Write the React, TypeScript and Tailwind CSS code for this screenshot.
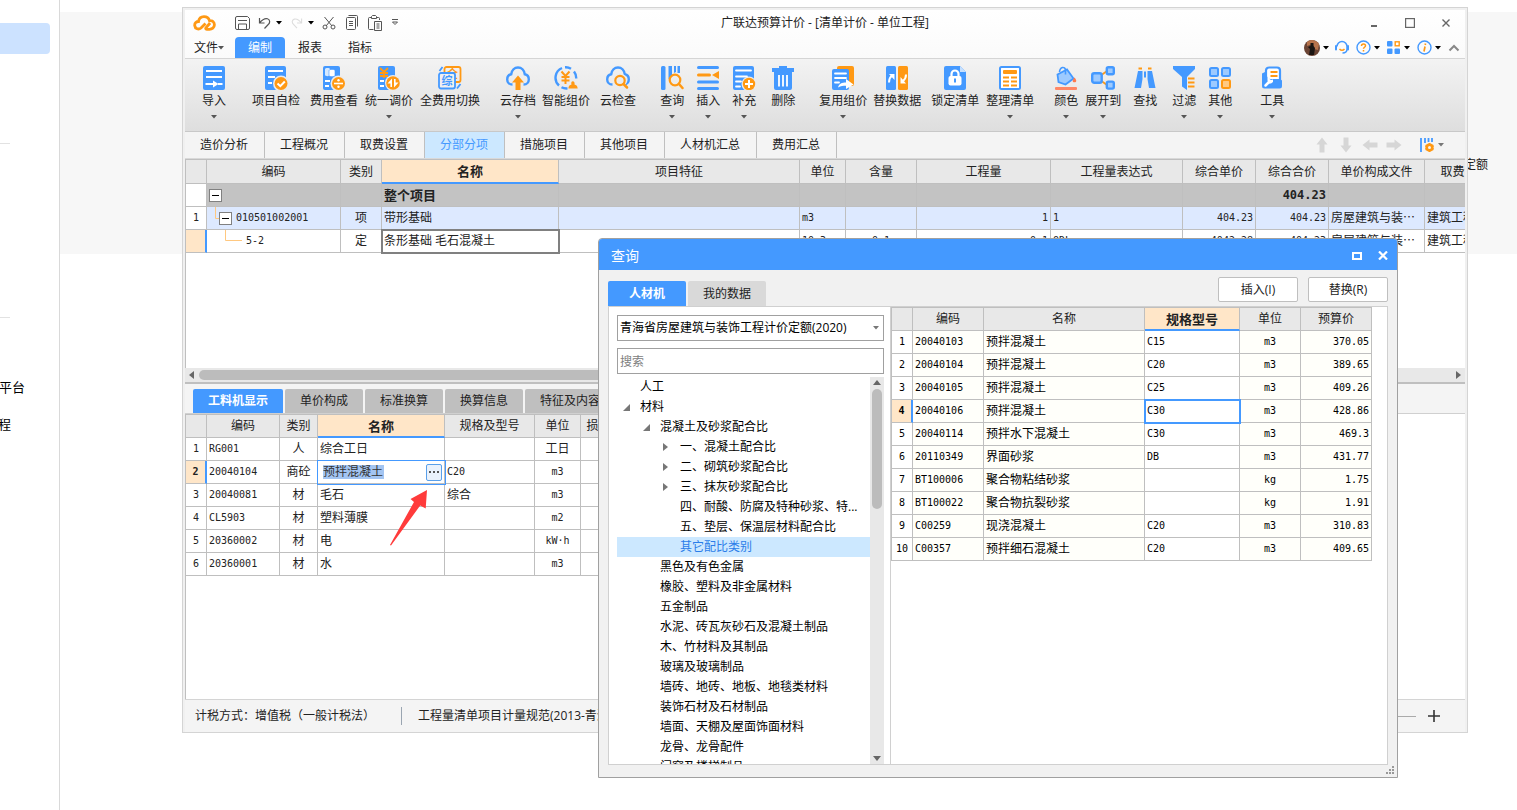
import React from "react";

const BLUE = "#4499ff";
const ORANGE = "#ff9914";

interface RibbonItem {
  label: string;
  icon: React.ReactNode;
  gap: string;
  menu?: boolean;
}

interface TreeItem {
  label: string;
  level: number;
  state?: "open" | "closed";
  selected?: boolean;
}

const Caret = ({ className = "text-black" }: { className?: string }) => (
  <svg className={className} width="6" height="4" viewBox="0 0 6 4" fill="currentColor" aria-hidden="true">
    <path d="M0 0h6L3 3.5z" />
  </svg>
);

const Icon = ({ children }: { children: React.ReactNode }) => (
  <svg className="block shrink-0" width="24" height="24" viewBox="0 0 24 24" fill="none" aria-hidden="true">
    {children}
  </svg>
);

const CLOUD = "M6.500 18.500C3 18.500 1.200 16 1.200 13.400c0-2.700 1.800-4.700 4-5.100C5.700 4.300 8.500 1.500 12 1.500s6.300 2.800 6.800 6.800c2.200.4 4 2.400 4 5.100 0 2.600-1.800 5.100-5.300 5.100";

const icons = {
  importDoc: (
    <Icon>
      <rect x="1" width="22" height="24" rx="2" fill={BLUE} />
      <path d="M4 5h16M4 11h16M3.500 18h8M16 18h4.500" stroke="#fff" strokeWidth="2" />
      <path d="M11 14.500l5.500 3.500-5.500 3.500z" fill="#fff" />
    </Icon>
  ),
  check: (
    <Icon>
      <path d="M3 0h17a2 2 0 0 1 2 2v22H3a2 2 0 0 1-2-2V2a2 2 0 0 1 2-2z" fill={BLUE} />
      <path d="M4 5h15M4 11h7M4 17h4" stroke="#fff" strokeWidth="2" />
      <circle cx="17" cy="17.500" r="8" fill="#ececec" />
      <circle cx="17" cy="17.500" r="6.500" fill={ORANGE} />
      <path d="M13.500 17.500l2.800 2.700 4.500-4.700" stroke="#fff" strokeWidth="2" />
    </Icon>
  ),
  view: (
    <Icon>
      <rect x="1" width="17" height="24" rx="2" fill={BLUE} />
      <path d="M3 3c0-1.500 5-1.500 5 0v6c0 1.500-5 1.500-5 0z" fill="#d5e9ff" />
      <path d="M7 4.500c0-1.500 6-1.500 6 0v5c0 1.500-6 1.500-6 0z" fill="#fff" stroke={BLUE} strokeWidth=".6" />
      <path d="M3 15h5M3 20h4" stroke="#fff" strokeWidth="2" />
      <circle cx="16.500" cy="17.500" r="8" fill="#ececec" />
      <circle cx="16.500" cy="17.500" r="6.500" fill={ORANGE} />
      <path d="M12 17.500h9" stroke="#fff" strokeWidth="1.600" />
      <circle cx="16.500" cy="14.200" r="1.200" fill="#fff" />
      <circle cx="16.500" cy="20.800" r="1.200" fill="#fff" />
    </Icon>
  ),
  adjust: (
    <Icon>
      <rect x="1" width="17" height="24" rx="2" fill={BLUE} />
      <path d="M3 2l4 4 4-4M7 6v6M3 7h8M3 10h8" stroke={ORANGE} strokeWidth="1.800" />
      <path d="M3 15h4M3 20h4" stroke="#fff" strokeWidth="2" />
      <circle cx="16" cy="17" r="8" fill="#ececec" />
      <circle cx="16" cy="17" r="6.800" fill={ORANGE} />
      <path d="M15 12.500V21h-1.600v-3.500h-2.900z" fill="#fff" />
      <path d="M17 21.500V13h1.600v3.500h2.900z" fill="#fff" />
    </Icon>
  ),
  swap: (
    <Icon>
      <rect x="6.500" y="1" width="16" height="15" rx="2" stroke={ORANGE} strokeWidth="1.800" />
      <text x="14.500" y="12" fontSize="11" fontWeight="700" textAnchor="middle" fill={ORANGE}>全</text>
      <rect x="1" y="7" width="16" height="15.500" rx="2" fill="#f0f0f0" stroke={BLUE} strokeWidth="1.800" />
      <text x="9" y="18.500" fontSize="11" fontWeight="700" textAnchor="middle" fill={BLUE}>综</text>
      <path d="M1.500 5l3-4M19 22.500l3.500-4.500" stroke={BLUE} strokeWidth="1.800" />
    </Icon>
  ),
  cloudUp: (
    <Icon>
      <path d={CLOUD} stroke={BLUE} strokeWidth="2.400" />
      <path d="M12 9.500l6 7h-3.500V24h-5v-7.500H6z" fill={ORANGE} />
    </Icon>
  ),
  smart: (
    <Icon>
      <path d="M8 2A10.500 10.500 0 0 0 5 19.500M11 1.200a10.500 10.500 0 0 1 6 1.600M20 5.500a10.500 10.500 0 0 1 2.200 7M7.500 21.200a10.500 10.500 0 0 0 6 1.200" stroke={BLUE} strokeWidth="2.400" />
      <path d="M7.500 5.500l4 4.500 4-4.500M11.500 10v8M7.500 11h8M7.500 14.500h8" stroke={ORANGE} strokeWidth="2" />
      <path d="M14.500 22.500c0-3 1.500-3.500 3-4-1.500-4.500 4-4.500 3 0 1.500.5 3 1 3.200 4z" fill={ORANGE} />
    </Icon>
  ),
  cloudFind: (
    <Icon>
      <path d={CLOUD} stroke={BLUE} strokeWidth="2.400" />
      <circle cx="14" cy="14.500" r="7" fill="#ececec" />
      <circle cx="14" cy="14.500" r="4.700" stroke={ORANGE} strokeWidth="2.200" />
      <path d="M17.500 18l3.500 3.500" stroke={ORANGE} strokeWidth="2.500" strokeLinecap="round" />
    </Icon>
  ),
  query: (
    <Icon>
      <rect x="1" width="4.500" height="24" rx="1.500" fill={BLUE} />
      <path d="M8.500 0H12v10l-3.500 3zM14 0h2v6l-2 1zM17.500 0H20v7h-2.500z" fill={BLUE} />
      <circle cx="15" cy="14" r="5.300" stroke={ORANGE} strokeWidth="2.200" />
      <path d="M19 18l3.500 4" stroke={ORANGE} strokeWidth="2.500" strokeLinecap="round" />
    </Icon>
  ),
  insert: (
    <Icon>
      <path d="M2.500 1.500h19M2.500 16h19M2.500 22.500h19" stroke={BLUE} strokeWidth="3" strokeLinecap="round" />
      <path d="M2.500 9h11" stroke={ORANGE} strokeWidth="3" strokeLinecap="round" />
      <path d="M16 9l7-4v8z" fill={ORANGE} />
    </Icon>
  ),
  append: (
    <Icon>
      <rect x="1" width="21" height="24" rx="2" fill={BLUE} />
      <path d="M4 4.500h15M4 10.500h11M4 15.500h5M4 20.500h4" stroke="#fff" strokeWidth="1.800" strokeLinecap="round" />
      <circle cx="17" cy="18" r="7.500" fill="#ececec" />
      <circle cx="17" cy="18" r="6.200" fill={ORANGE} />
      <path d="M17 14v8M13 18h8" stroke="#fff" strokeWidth="2" />
    </Icon>
  ),
  trash: (
    <Icon>
      <path d="M1 2h7V0h8v2h7v4h-2v16a2 2 0 0 1-2 2H5a2 2 0 0 1-2-2V6H1z" fill={BLUE} />
      <path d="M8 9v11.500M12 9v11.500M16 9v11.500" stroke="#fff" strokeWidth="1.800" />
    </Icon>
  ),
  reuse: (
    <Icon>
      <rect x="6" width="17" height="20" rx="2" fill={ORANGE} />
      <rect x="1" y="3" width="17" height="21" rx="2" fill={BLUE} />
      <path d="M4 7.500h11M4 12h11M4 16.500h4" stroke="#fff" strokeWidth="1.800" strokeLinecap="round" />
      <path d="M7 21.500c1-4 4-5 8-5V13l7.500 5.500L15 23v-3.200c-3 0-5 .2-8 1.700z" fill="#fff" />
    </Icon>
  ),
  replace: (
    <Icon>
      <rect x="1" width="10" height="24" rx="1.500" fill={BLUE} />
      <rect x="13" width="10" height="24" rx="1.500" fill={ORANGE} />
      <path d="M4 16.500c0-3 .5-5 3-7M21 8.500c0 3-.5 4.500-3 6.500" stroke="#fff" strokeWidth="2" />
      <path d="M4 8h5.500v6zM15.500 11v6.500H21z" fill="#fff" />
    </Icon>
  ),
  lock: (
    <Icon>
      <path d="M3 0h14l6 6v16a2 2 0 0 1-2 2H3a2 2 0 0 1-2-2V2a2 2 0 0 1 2-2z" fill={BLUE} />
      <path d="M17 0l6 6h-6z" fill="#c5e0ff" />
      <path d="M8.500 11V8a3.500 3.500 0 0 1 7 0v3" stroke="#fff" strokeWidth="2.200" />
      <rect x="5.500" y="10" width="13" height="9.500" rx="2" fill="#fff" />
      <path d="M12 12.500v4" stroke={BLUE} strokeWidth="2" />
    </Icon>
  ),
  arrange: (
    <Icon>
      <rect x="2" y="1" width="20" height="22" rx="1.500" fill="#fff" stroke={BLUE} strokeWidth="2" />
      <rect x="5" y="4" width="14" height="4" rx="1" fill={ORANGE} />
      <path d="M5 11.500h6M13 11.500h6M5 15.500h6M13 15.500h6M5 19.500h6M13 19.500h6" stroke={ORANGE} strokeWidth="1.800" />
    </Icon>
  ),
  color: (
    <Icon>
      <path d="M3.500 8.500L13 3.500l6.500 9-8 6L4.500 16z" fill="#9dcaff" stroke={BLUE} strokeWidth="1.800" />
      <path d="M5.500 6C6 .5 11 .2 11.500 4v4.500" stroke={BLUE} strokeWidth="1.600" />
      <path d="M20.500 11.500c2.500 3 2.200 4.800 0 4.800s-2.500-1.800 0-4.800z" fill="#ff7a4d" />
      <rect x="1" y="21" width="22" height="3" rx="1" fill="#ff8766" />
    </Icon>
  ),
  expand: (
    <Icon>
      <path d="M9 10l7-5M9 14l7 5" stroke={ORANGE} strokeWidth="1.800" />
      <rect x="1.200" y="7.200" width="9.500" height="9.500" rx="2" fill="#9dcaff" stroke={BLUE} strokeWidth="2.400" />
      <rect x="15.800" y="1.200" width="7" height="7" rx="1.500" fill="#9dcaff" stroke={BLUE} strokeWidth="2.400" />
      <rect x="15.800" y="15.600" width="7" height="7" rx="1.500" fill="#9dcaff" stroke={BLUE} strokeWidth="2.400" />
    </Icon>
  ),
  find: (
    <Icon>
      <path d="M5 5h4.500v8L8 22H1.500zM19 5h-4.500v8l1.500 9h6.500z" fill={BLUE} />
      <path d="M11 5.500h2v6h-2z" fill={BLUE} />
      <path d="M5.500 2.500h3.500M15 2.500h3.500" stroke={ORANGE} strokeWidth="2" />
    </Icon>
  ),
  filter: (
    <Icon>
      <path d="M1 0h22v3l-8 8v13l-5-3.500V11L1 3z" fill={BLUE} />
      <path d="M15 11h8v13h-8z" fill="#ececec" />
      <path d="M16 12.500h6.500M16 16.500h6.500M16 20.500h6.500" stroke={ORANGE} strokeWidth="2" />
    </Icon>
  ),
  others: (
    <Icon>
      <rect x="2" y="2" width="8" height="8" rx="1.500" fill="#9dcaff" stroke={BLUE} strokeWidth="2" />
      <rect x="14" y="2" width="8" height="8" rx="1.500" fill="#9dcaff" stroke={BLUE} strokeWidth="2" />
      <rect x="2" y="14" width="8" height="8" rx="1.500" fill="#9dcaff" stroke={BLUE} strokeWidth="2" />
      <rect x="14" y="14" width="8" height="8" rx="1.500" fill="#ffca84" stroke={ORANGE} strokeWidth="2" />
    </Icon>
  ),
  tools: (
    <Icon>
      <path d="M8.500 1.500h8.500a3 3 0 0 1 3 3V14H6V4.500a3 3 0 0 1 3-3z" fill="#fff" stroke={BLUE} strokeWidth="2.200" />
      <path d="M10.500 6h7M10.500 10h7" stroke={ORANGE} strokeWidth="1.800" />
      <path d="M2 7.500L5 6h2v4c0 2 1.500 3 3.500 3H20l2 1.500V20a2.500 2.500 0 0 1-2.500 2.500h-15A2.500 2.500 0 0 1 2 20z" fill={BLUE} />
      <path d="M5.500 19.500l4-4" stroke="#fff" strokeWidth="2.500" strokeLinecap="round" />
      <path d="M7.500 14.500V12l2-1.500v2.500l1.500 1 2-.5V16l-2 1.500H8.500z" fill="#fff" />
    </Icon>
  ),
};

const ribbon: RibbonItem[] = [
  { label: "导入", icon: icons.importDoc, gap: "ml-[17px]", menu: true },
  { label: "项目自检", icon: icons.check, gap: "ml-[26px]" },
  { label: "费用查看", icon: icons.view, gap: "ml-[10px]" },
  { label: "统一调价", icon: icons.adjust, gap: "ml-[7px]", menu: true },
  { label: "全费用切换", icon: icons.swap, gap: "ml-[7px]" },
  { label: "云存档", icon: icons.cloudUp, gap: "ml-[20px]", menu: true },
  { label: "智能组价", icon: icons.smart, gap: "ml-[6px]" },
  { label: "云检查", icon: icons.cloudFind, gap: "ml-[10px]" },
  { label: "查询", icon: icons.query, gap: "ml-[24px]", menu: true },
  { label: "插入", icon: icons.insert, gap: "ml-[12px]", menu: true },
  { label: "补充", icon: icons.append, gap: "ml-[12px]", menu: true },
  { label: "删除", icon: icons.trash, gap: "ml-[15px]" },
  { label: "复用组价", icon: icons.reuse, gap: "ml-[24px]", menu: true },
  { label: "替换数据", icon: icons.replace, gap: "ml-[6px]" },
  { label: "锁定清单", icon: icons.lock, gap: "ml-[10px]" },
  { label: "整理清单", icon: icons.arrange, gap: "ml-[7px]", menu: true },
  { label: "颜色", icon: icons.color, gap: "ml-[20px]", menu: true },
  { label: "展开到", icon: icons.expand, gap: "ml-[7px]", menu: true },
  { label: "查找", icon: icons.find, gap: "ml-[12px]" },
  { label: "过滤", icon: icons.filter, gap: "ml-[15px]", menu: true },
  { label: "其他", icon: icons.others, gap: "ml-[12px]", menu: true },
  { label: "工具", icon: icons.tools, gap: "ml-[28px]", menu: true },
];

const pageTabs = ["造价分析", "工程概况", "取费设置", "分部分项", "措施项目", "其他项目", "人材机汇总", "费用汇总"];

const detailTabs = ["单价构成", "标准换算", "换算信息", "特征及内容", "工程量明细"];

const resources = [
  ["RG001", "人", "综合工日", "", "工日"],
  ["20040104", "商砼", "预拌混凝土", "C20", "m3"],
  ["20040081", "材", "毛石", "综合", "m3"],
  ["CL5903", "材", "塑料薄膜", "", "m2"],
  ["20360002", "材", "电", "", "kW·h"],
  ["20360001", "材", "水", "", "m3"],
];

const materials = [
  ["20040103", "预拌混凝土", "C15", "m3", "370.05"],
  ["20040104", "预拌混凝土", "C20", "m3", "389.65"],
  ["20040105", "预拌混凝土", "C25", "m3", "409.26"],
  ["20040106", "预拌混凝土", "C30", "m3", "428.86"],
  ["20040114", "预拌水下混凝土", "C30", "m3", "469.3"],
  ["20110349", "界面砂浆", "DB", "m3", "431.77"],
  ["BT100006", "聚合物粘结砂浆", "", "kg", "1.75"],
  ["BT100022", "聚合物抗裂砂浆", "", "kg", "1.91"],
  ["C00259", "现浇混凝土", "C20", "m3", "310.83"],
  ["C00357", "预拌细石混凝土", "C20", "m3", "409.65"],
];

const tree: TreeItem[] = [
  { label: "人工", level: 0 },
  { label: "材料", level: 0, state: "open" },
  { label: "混凝土及砂浆配合比", level: 1, state: "open" },
  { label: "一、混凝土配合比", level: 2, state: "closed" },
  { label: "二、砌筑砂浆配合比", level: 2, state: "closed" },
  { label: "三、抹灰砂浆配合比", level: 2, state: "closed" },
  { label: "四、耐酸、防腐及特种砂浆、特...", level: 2 },
  { label: "五、垫层、保温层材料配合比", level: 2 },
  { label: "其它配比类别", level: 2, selected: true },
  { label: "黑色及有色金属", level: 1 },
  { label: "橡胶、塑料及非金属材料", level: 1 },
  { label: "五金制品", level: 1 },
  { label: "水泥、砖瓦灰砂石及混凝土制品", level: 1 },
  { label: "木、竹材料及其制品", level: 1 },
  { label: "玻璃及玻璃制品", level: 1 },
  { label: "墙砖、地砖、地板、地毯类材料", level: 1 },
  { label: "装饰石材及石材制品", level: 1 },
  { label: "墙面、天棚及屋面饰面材料", level: 1 },
  { label: "龙骨、龙骨配件", level: 1 },
  { label: "门窗及楼梯制品", level: 1 },
];

const indent = ["pl-[6px]", "pl-[26px]", "pl-[46px]"];

const MONO = "font-['DejaVu_Sans_Mono','Noto_Sans_CJK_SC',monospace] text-[10px]";
const TABLE = "table-fixed border-separate border-spacing-0 whitespace-nowrap text-left";
const TH = "h-[23px] border-r border-b border-[#bfbfbf] bg-[#e8e8e8] p-0 text-center font-normal";
const TD = "h-[23px] overflow-hidden border-r border-b border-[#bfbfbf] px-0.5 py-0";
const HOT = "h-[23px] border-r border-b-2 border-r-[#bfbfbf] border-b-[#4499ff] bg-[#ffe6c8] p-0 text-center text-[13px] font-bold";

// picks the narrow face for codes and numbers, the regular one for Chinese text
const face = (text: string) => (/^[\x20-\x7e·]*$/.test(text) ? MONO : "");

const Cols = ({ widths }: { widths: string[] }) => (
  <colgroup>
    {widths.map((width, i) => (
      <col key={i} className={width} />
    ))}
  </colgroup>
);

const Minus = () => (
  <button aria-label="折叠" className="flex size-[13px] shrink-0 items-center justify-center border border-[#808080] bg-white">
    <span className="h-px w-[7px] bg-black" />
  </button>
);

const TitleBar = () => (
  <div className="grid h-[27px] grid-cols-[1fr_auto_1fr] items-center pb-0.5">
    <div className="flex items-center pl-2">
      <svg width="23" height="16" viewBox="0 0 23 16" fill="none" aria-hidden="true">
        <path d="M12.500 8.500L8 13C5.500 15 2 13.800 1.700 10.500 1.500 8 3.500 6.500 5.500 6.500 6 3 8.500 1.600 11 1.600c3 0 4.800 1.600 5.500 4 2.800-.4 4.900 1.500 4.900 4.200 0 2.900-2.400 4.600-5.200 4.500h-2.500c-1 0-1.300-.8-.6-1.600l4-4.700" stroke={ORANGE} strokeWidth="2.800" />
      </svg>
      <button aria-label="保存" className="ml-[19px]">
        <svg width="15" height="14" viewBox="0 0 15 14" fill="none" stroke="#555">
          <path d="M2 .5h10.500l2 2V12a1.500 1.500 0 0 1-1.500 1.500H2A1.500 1.500 0 0 1 .5 12V2A1.500 1.500 0 0 1 2 .5zM3 4.500h9M3.500 13.500V8h8v5.500" />
        </svg>
      </button>
      <button aria-label="撤销" className="ml-2 flex items-center gap-[5px]">
        <svg width="13" height="12" viewBox="0 0 13 12" fill="none" stroke="#555" strokeWidth="1.200">
          <path d="M1.500 1v5h5M1.500 6C4 3 7 1 9.500 1.800c2.800 1 2.800 4 .5 6L6.500 11.500" />
        </svg>
        <Caret />
      </button>
      <button aria-label="重做" className="ml-[9px] flex items-center gap-[5px]">
        <svg width="12" height="12" viewBox="0 0 13 12" fill="none" stroke="#ddd" strokeWidth="1.200">
          <path d="M11.500 1v5h-5M11.500 6C9 3 6 1 3.500 1.800c-2.800 1-2.800 4-.5 6l3.500 3.700" />
        </svg>
        <Caret />
      </button>
      <button aria-label="剪切" className="ml-2">
        <svg width="14" height="14" viewBox="0 0 14 14" fill="none" stroke="#555">
          <path d="M2.500 1l7.500 9M11.500 1L4 10" />
          <circle cx="3" cy="11" r="2" />
          <circle cx="11" cy="11" r="2" />
        </svg>
      </button>
      <button aria-label="复制" className="ml-[10px]">
        <svg width="12" height="15" viewBox="0 0 12 15" fill="none" stroke="#555">
          <path d="M2.500.5h8a1 1 0 0 1 1 1v10M.5 3.500a1 1 0 0 1 1-1h7a1 1 0 0 1 1 1v10a1 1 0 0 1-1 1h-7a1 1 0 0 1-1-1zM3 6.500h4M3 8.500h4M3 10.500h4" />
        </svg>
      </button>
      <button aria-label="粘贴" className="ml-[10px]">
        <svg width="15" height="16" viewBox="0 0 15 16" fill="none" stroke="#555">
          <path d="M5.500 14.500h-4a1 1 0 0 1-1-1v-10a1 1 0 0 1 1-1H3M9 2.500h1.500a1 1 0 0 1 1 1V5M3.500 1.500L4.500.5h3l1 1v2h-5zM6.500 6.500h7v9h-7zM8.500 9h3M8.500 11h3M8.500 13h3" />
        </svg>
      </button>
      <button aria-label="自定义" className="ml-2">
        <svg width="8" height="7" viewBox="0 0 8 7" fill="none" stroke="#555">
          <path d="M1 .5h6M1.500 3h5L4 5.500z" />
        </svg>
      </button>
    </div>
    <h1>广联达预算计价 - [清单计价 - 单位工程]</h1>
    <div className="flex items-center justify-end gap-[26px] pr-[14px] text-[#666]">
      <button aria-label="最小化">
        <svg width="10" height="10" viewBox="0 0 10 10" stroke="currentColor" strokeWidth="2">
          <path d="M2 8h6" />
        </svg>
      </button>
      <button aria-label="最大化">
        <svg width="10" height="10" viewBox="0 0 10 10" fill="none" stroke="currentColor" strokeWidth="1.200">
          <rect x=".6" y=".6" width="8.800" height="8.800" />
        </svg>
      </button>
      <button aria-label="关闭">
        <svg width="10" height="10" viewBox="0 0 10 10" stroke="currentColor" strokeWidth="1.400">
          <path d="M1.500 1.500l7 7M8.500 1.500l-7 7" />
        </svg>
      </button>
    </div>
  </div>
);

const MenuBar = () => (
  <nav className="flex h-[22px] items-center border-b border-[#d5d5d5]">
    <button className="ml-[9px] flex items-center">
      文件
      <Caret className="text-[#555]" />
    </button>
    <button className="ml-[11px] h-full w-[50px] rounded-t-sm bg-[#4499ff] text-white">编制</button>
    <button className="ml-[13px]">报表</button>
    <button className="ml-[26px]">指标</button>
    <div className="ml-auto flex items-center pr-[5px]">
      <button aria-label="账号" className="flex items-center gap-[3px]">
        <svg width="16" height="16" viewBox="0 0 16 16">
          <circle cx="8" cy="8" r="8" fill="#6b4434" />
          <path d="M3 2a8 8 0 0 1 12 2l-1 6-4-1-1-5-6 2z" fill="#b8744c" />
          <path d="M6.500 3h3v3l1.500 2-1 7H5l1-6-2-2 2.500-1z" fill="#1b1512" />
        </svg>
        <Caret />
      </button>
      <button aria-label="客服" className="ml-[6px]">
        <svg width="14" height="15" viewBox="0 0 14 15" fill="none">
          <path d="M2 6.500a5 5 0 0 1 10 0v2.500c0 2.500-2 4-4.500 4" stroke={BLUE} strokeWidth="1.500" />
          <path d="M1 6v3.500M13 6v3.500" stroke={BLUE} strokeWidth="2" strokeLinecap="round" />
          <path d="M4.500 9c1.500 1.500 3.500 1.500 5 0" stroke={ORANGE} strokeWidth="1.500" />
        </svg>
      </button>
      <button aria-label="帮助" className="ml-[7px] flex items-center gap-[3px]">
        <svg width="15" height="15" viewBox="0 0 15 15" fill="none">
          <circle cx="7.500" cy="7.500" r="6.500" stroke={BLUE} strokeWidth="1.400" />
          <path d="M5.500 6c0-2.700 4-2.500 4-.2 0 1.500-2 1.400-2 3M7.500 10v1.500" stroke={ORANGE} strokeWidth="1.500" />
        </svg>
        <Caret />
      </button>
      <button aria-label="应用" className="ml-[7px] flex items-center gap-[4px]">
        <svg width="13" height="13" viewBox="0 0 13 13" fill={BLUE}>
          <rect width="5.500" height="5.500" rx="1" />
          <rect y="7.500" width="5.500" height="5.500" rx="1" />
          <rect x="7.500" y="7.500" width="5.500" height="5.500" rx="1" />
          <rect x="8.200" y=".8" width="4" height="4" fill="#fff" stroke={ORANGE} strokeWidth="1.400" />
        </svg>
        <Caret />
      </button>
      <button aria-label="关于" className="ml-[7px] flex items-center gap-[3px]">
        <svg width="15" height="15" viewBox="0 0 15 15" fill="none">
          <circle cx="7.500" cy="7.500" r="6.500" stroke={BLUE} strokeWidth="1.400" />
          <path d="M8.500 3.500L8.200 5M8 6.500l-1 5" stroke={ORANGE} strokeWidth="1.700" />
        </svg>
        <Caret />
      </button>
      <button aria-label="收起" className="ml-[7px]">
        <svg width="12" height="8" viewBox="0 0 12 8" fill="none" stroke="#888" strokeWidth="2">
          <path d="M1.500 6.500L6 2l4.500 4.500" />
        </svg>
      </button>
    </div>
  </nav>
);

const Ribbon = () => (
  <div className="flex h-[73px] items-start overflow-hidden border-b border-[#c8c8c8] bg-linear-to-b from-[#f3f3f3] to-[#dedede] pt-[7px]">
    {ribbon.map((item) => (
      <button key={item.label} className={`flex shrink-0 flex-col items-center ${item.gap}`}>
        {item.icon}
        <span className="mt-[3px] leading-4">{item.label}</span>
        {item.menu && <Caret className="mt-[6px] text-[#555]" />}
      </button>
    ))}
  </div>
);

const PageTabs = () => (
  <div className="flex h-[27px] shrink-0 border-b border-[#d9d9d9] bg-[#f4f4f4]">
    {pageTabs.map((tab) => (
      <button
        key={tab}
        className={`border-r border-[#bfbfbf] pr-4 pl-[15px] ${tab === "分部分项" ? "bg-[#cce8ff] text-[#4499ff]" : ""}`}
      >
        {tab}
      </button>
    ))}
    <div className="ml-auto flex items-center gap-2 pr-[21px] text-[#d6d6d6]">
      {["rotate-0", "rotate-180", "-rotate-90", "rotate-90"].map((turn) => (
        <button key={turn} aria-label="移动">
          <svg className={turn} width="16" height="16" viewBox="0 0 16 16" fill="currentColor">
            <path d="M8 .5l5.500 7H10.500V15.500h-5V7.500H2.500z" />
          </svg>
        </button>
      ))}
      <button aria-label="列设置" className="ml-[9px] flex items-center gap-[3px]">
        <svg width="16" height="16" viewBox="0 0 16 16" fill="none">
          <path d="M2 1v14M6 1v5M9.500 1v4M13 1v4" stroke={BLUE} strokeWidth="1.800" />
          <circle cx="10.500" cy="10.500" r="2.800" stroke={ORANGE} strokeWidth="2.600" />
          <path d="M10.500 6v1.500M10.500 13.500V15M6.500 8.500l1 .5M6.500 12.500l1-.5M14.500 8.500l-1 .5M14.500 12.500l-1-.5" stroke={ORANGE} strokeWidth="2" />
        </svg>
        <Caret className="text-[#777]" />
      </button>
    </div>
  </div>
);

const BillGrid = () => (
  <div className="h-[209px] shrink-0 overflow-hidden border-t border-l border-[#bfbfbf] bg-white">
    <table className={`${TABLE} w-[1319px]`}>
      <Cols
        widths={[
          "w-[21px]", "w-[134px]", "w-[41px]", "w-[177px]", "w-[241px]", "w-[46px]", "w-[71px]",
          "w-[134px]", "w-[132px]", "w-[73px]", "w-[73px]", "w-[96px]", "w-[80px]",
        ]}
      />
      <thead>
        <tr className="h-6">
          <th className={TH} />
          <th className={TH}>编码</th>
          <th className={TH}>类别</th>
          <th className={HOT}>名称</th>
          {["项目特征", "单位", "含量", "工程量", "工程量表达式", "综合单价", "综合合价", "单价构成文件", "取费专业"].map((h) => (
            <th key={h} className={TH}>{h}</th>
          ))}
        </tr>
      </thead>
      <tbody>
        <tr className="bg-[#c3c3c3]">
          <td className={`${TD} bg-white`} />
          <td className={TD}><Minus /></td>
          <td className={TD} />
          <td className={`${TD} text-[13px] leading-4 font-bold`}>整个项目</td>
          <td className={TD} /><td className={TD} /><td className={TD} /><td className={TD} /><td className={TD} /><td className={TD} />
          <td className={`${TD} text-right font-['DejaVu_Sans_Mono',monospace] text-[12px] font-bold`}>404.23</td>
          <td className={TD} /><td className={TD} />
        </tr>
        <tr className="bg-[#dde9ff]">
          <td className={`${TD} ${MONO} bg-white text-center`}>1</td>
          <td className={`${TD} ${MONO}`}>
            <div className="flex h-[22px] items-center">
              <svg width="10" height="22" viewBox="0 0 10 22" fill="none" stroke="#ffc880" aria-hidden="true">
                <path d="M6.500 0v11.500H10" />
              </svg>
              <Minus />
              <span className="ml-1">010501002001</span>
            </div>
          </td>
          <td className={`${TD} text-center`}>项</td>
          <td className={TD}>带形基础</td>
          <td className={TD} />
          <td className={`${TD} ${MONO}`}>m3</td>
          <td className={TD} />
          <td className={`${TD} ${MONO} text-right`}>1</td>
          <td className={`${TD} ${MONO}`}>1</td>
          <td className={`${TD} ${MONO} text-right`}>404.23</td>
          <td className={`${TD} ${MONO} text-right`}>404.23</td>
          <td className={TD}>房屋建筑与装⋯</td>
          <td className={TD}>建筑工程</td>
        </tr>
        <tr>
          <td className={`${TD} border-r-2 border-r-[#4499ff] bg-[#ffe6c8]`} />
          <td className={`${TD} ${MONO}`}>
            <div className="flex h-[22px] items-center">
              <svg width="33" height="22" viewBox="0 0 33 22" fill="none" stroke="#ffc880" aria-hidden="true">
                <path d="M16.500 0v10.500H33" />
              </svg>
              <span className="ml-1">5-2</span>
            </div>
          </td>
          <td className={`${TD} text-center`}>定</td>
          <td className={`${TD} outline-2 -outline-offset-1 outline-[#808080]`}>条形基础 毛石混凝土</td>
          <td className={TD} />
          <td className={`${TD} ${MONO}`}>10m3</td>
          <td className={`${TD} ${MONO} text-center`}>0.1</td>
          <td className={`${TD} ${MONO} text-right`}>0.1</td>
          <td className={`${TD} ${MONO}`}>QDL</td>
          <td className={`${TD} ${MONO} text-right`}>4042.28</td>
          <td className={`${TD} ${MONO} text-right`}>404.23</td>
          <td className={TD}>房屋建筑与装⋯</td>
          <td className={TD}>建筑工程</td>
        </tr>
      </tbody>
    </table>
  </div>
);

const ResourceGrid = () => (
  <div className="min-h-0 flex-1 overflow-hidden border-l border-[#bfbfbf] bg-white">
    <table className={`${TABLE} w-[443px] border-t border-[#bfbfbf]`}>
      <Cols widths={["w-[21px]", "w-[73px]", "w-[38px]", "w-[127px]", "w-[90px]", "w-[46px]", "w-[48px]"]} />
      <thead>
        <tr>
          <th className={TH} />
          <th className={TH}>编码</th>
          <th className={TH}>类别</th>
          <th className={HOT}>名称</th>
          <th className={TH}>规格及型号</th>
          <th className={TH}>单位</th>
          <th className={TH}>损耗率</th>
        </tr>
      </thead>
      <tbody>
        {resources.map(([code, kind, name, spec, unit], i) => {
          const active = i === 1;
          return (
            <tr key={code}>
              <td className={`${TD} ${MONO} text-center ${active ? "border-r-2 border-r-[#4499ff] bg-[#ffe6c8] font-bold" : ""}`}>{i + 1}</td>
              <td className={`${TD} ${MONO}`}>{code}</td>
              <td className={`${TD} text-center`}>{kind}</td>
              {active ? (
                <td className={`${TD} outline outline-offset-0 outline-[#4499ff]`}>
                  <div className="flex items-center justify-between pl-[3px]">
                    <input aria-label="名称" defaultValue={name} className="h-[14px] w-[61px] bg-[#a3c5f2] text-[#333]" />
                    <button aria-label="选择" className="flex h-[17px] w-4 items-center justify-center gap-[2px] rounded-xs border border-[#5aa0ea] bg-[#eaf2fc]">
                      <span className="size-[2px] bg-[#555]" />
                      <span className="size-[2px] bg-[#555]" />
                      <span className="size-[2px] bg-[#555]" />
                    </button>
                  </div>
                </td>
              ) : (
                <td className={TD}>{name}</td>
              )}
              <td className={`${TD} ${face(spec)}`}>{spec}</td>
              <td className={`${TD} text-center ${face(unit)}`}>{unit}</td>
              <td className={TD} />
            </tr>
          );
        })}
      </tbody>
    </table>
  </div>
);

const MainWindow = () => (
  <section className="absolute top-[7px] right-[49px] bottom-[77px] left-[182px] flex flex-col overflow-hidden border border-[#d4d4d4] bg-[#f0f0f0] px-0.5 pt-0.5">
    <header className="shrink-0 bg-linear-to-b from-white to-[#f3f3f3]">
      <TitleBar />
      <MenuBar />
      <Ribbon />
    </header>
    <PageTabs />
    <BillGrid />
    <div className="flex h-[14px] shrink-0 items-center justify-between bg-[#e8e8e8] px-1">
      <svg width="5" height="8" viewBox="0 0 5 8" fill="#666"><path d="M5 0v8L0 4z" /></svg>
      <div className="mr-[60px] ml-[5px] h-[10px] flex-1 rounded-full bg-[#bcbcbc]" />
      <svg width="5" height="8" viewBox="0 0 5 8" fill="#666"><path d="M0 0v8l5-4z" /></svg>
    </div>
    <div className="h-0.5 shrink-0 bg-[#bfbfbf]" />
    <div className="flex h-[30px] shrink-0 items-end gap-0.5 border-b border-[#d0d0d0] bg-[#f4f4f4] pl-2">
      <button className="h-6 w-[90px] rounded-t-xs bg-[#4499ff] font-bold text-white">工料机显示</button>
      {detailTabs.map((tab) => (
        <button key={tab} className="h-6 rounded-t-xs bg-[#bfbfbf] px-[15px]">{tab}</button>
      ))}
    </div>
    <ResourceGrid />
    <footer className="flex h-[33px] shrink-0 items-center border-t border-[#d4d4d4] bg-[#f4f4f4] pl-[10px]">
      <span>计税方式：增值税（一般计税法）</span>
      <span className="ml-[26px] h-[18px] w-px bg-[#9aa5b1]" />
      <span className="ml-4">工程量清单项目计量规范(2013-青海)</span>
      <div className="ml-auto flex items-center gap-3 pr-[25px]">
        <span className="h-px w-[120px] bg-[#aaa]" />
        <button aria-label="放大">
          <svg width="12" height="12" viewBox="0 0 12 12" stroke="#333" strokeWidth="1.600"><path d="M6 0v12M0 6h12" /></svg>
        </button>
      </div>
    </footer>
  </section>
);

const MaterialTree = () => (
  <div className="mt-[3px] flex min-h-0 flex-1">
    <ul className="min-w-0 flex-1 overflow-hidden text-black">
      {tree.map((node) => (
        <li
          key={node.label}
          className={`flex h-5 items-center whitespace-nowrap ${indent[node.level]} ${node.selected ? "bg-[#cce8ff] text-[#2b7de9]" : ""}`}
        >
          <span className="w-[17px] shrink-0">
            {node.state === "open" && (
              <svg width="7" height="7" viewBox="0 0 7 7" fill="#777"><path d="M7 0v7H0z" /></svg>
            )}
            {node.state === "closed" && (
              <svg width="5" height="8" viewBox="0 0 5 8" fill="#777"><path d="M0 0v8l5-4z" /></svg>
            )}
          </span>
          {node.label}
        </li>
      ))}
    </ul>
    <div className="flex w-[14px] flex-col items-center bg-[#e8e8e8] py-[3px]">
      <svg width="8" height="5" viewBox="0 0 8 5" fill="#666"><path d="M0 5h8L4 0z" /></svg>
      <div className="mt-1 h-[120px] w-[10px] rounded-full bg-[#bcbcbc]" />
      <svg className="mt-auto" width="8" height="5" viewBox="0 0 8 5" fill="#666"><path d="M0 0h8L4 5z" /></svg>
    </div>
  </div>
);

const MaterialGrid = () => (
  <div className="min-w-0 flex-1 overflow-hidden">
    <table className={`${TABLE} w-[481px] border-t border-l border-[#bfbfbf] text-black`}>
      <Cols widths={["w-[21px]", "w-[71px]", "w-[161px]", "w-[95px]", "w-[61px]", "w-[71px]"]} />
      <thead>
        <tr className="text-[#222]">
          <th className={TH} />
          <th className={TH}>编码</th>
          <th className={TH}>名称</th>
          <th className={`${HOT} border-b`}>规格型号</th>
          <th className={TH}>单位</th>
          <th className={TH}>预算价</th>
        </tr>
      </thead>
      <tbody>
        {materials.map(([code, name, spec, unit, price], i) => {
          const active = i === 3;
          return (
            <tr key={code} className="bg-[#fffffa]">
              <td className={`${TD} ${MONO} text-center ${active ? "border-r-2 border-r-[#4499ff] bg-[#ffe6c8] font-bold" : "bg-white"}`}>{i + 1}</td>
              <td className={`${TD} ${MONO}`}>{code}</td>
              <td className={TD}>{name}</td>
              <td className={`${TD} ${MONO} bg-white ${active ? "outline-2 -outline-offset-1 outline-[#4499ff]" : ""}`}>{spec}</td>
              <td className={`${TD} ${MONO} text-center`}>{unit}</td>
              <td className={`${TD} ${MONO} text-right`}>{price}</td>
            </tr>
          );
        })}
      </tbody>
    </table>
  </div>
);

const QueryDialog = () => (
  <section
    role="dialog"
    aria-label="查询"
    className="absolute top-[238px] bottom-[32px] left-[598px] flex w-[800px] flex-col rounded-t border border-[#a0a0a0] bg-[#f1f1f1]"
  >
    <header className="flex h-[31px] shrink-0 items-center rounded-t-[3px] bg-[#4499ff] pt-0.5 pr-[9px] pl-3 text-white">
      <h2 className="text-[14px]">查询</h2>
      <button aria-label="最大化" className="ml-auto">
        <svg width="10" height="8" viewBox="0 0 10 8" fill="none" stroke="currentColor" strokeWidth="2"><rect x="1" y="1" width="8" height="6" /></svg>
      </button>
      <button aria-label="关闭" className="ml-4">
        <svg width="10" height="9" viewBox="0 0 10 9" stroke="currentColor" strokeWidth="2.200"><path d="M1 .5l8 8M9 .5l-8 8" /></svg>
      </button>
    </header>
    <div className="flex h-9 shrink-0 items-end gap-0.5 px-[9px]">
      <button className="h-[25px] w-[78px] rounded-t-xs bg-[#4499ff] font-bold text-white">人材机</button>
      <button className="h-[25px] w-[78px] rounded-t-xs bg-[#d9d9d9]">我的数据</button>
      <div className="mb-1 ml-auto flex gap-[10px]">
        <button className="h-[25px] w-20 rounded-xs border border-[#bfbfbf] bg-white">插入(I)</button>
        <button className="h-[25px] w-20 rounded-xs border border-[#bfbfbf] bg-white">替换(R)</button>
      </div>
    </div>
    <div className="mx-[9px] flex min-h-0 flex-1 border border-[#d0d0d0] bg-white">
      <div className="flex w-[282px] shrink-0 flex-col border-r border-[#d0d0d0] pt-2 pr-[6px] pl-2">
        <div className="relative">
          <select aria-label="定额库" className="block h-[26px] w-full appearance-none border border-[#a0a0a0] bg-white px-[2px] text-black">
            <option>青海省房屋建筑与装饰工程计价定额(2020)</option>
          </select>
          <Caret className="pointer-events-none absolute top-[11px] right-[5px] text-[#777]" />
        </div>
        <input aria-label="搜索" placeholder="搜索" className="mt-[7px] h-[26px] w-full shrink-0 border border-[#a0a0a0] bg-white px-[2px] placeholder:text-[#808080]" />
        <MaterialTree />
      </div>
      <MaterialGrid />
    </div>
    <div className="flex h-3 shrink-0 items-end justify-end p-[3px]">
      <svg width="8" height="8" viewBox="0 0 8 8" fill="#999" aria-hidden="true">
        <path d="M6 0h2v2H6zM3 3h2v2H3zM6 3h2v2H6zM0 6h2v2H0zM3 6h2v2H3zM6 6h2v2H6z" />
      </svg>
    </div>
  </section>
);

const Sidebar = () => (
  <aside className="w-[60px] shrink-0 overflow-hidden border-r border-[#d9d9d9] pt-[23px] text-[13px] leading-5 text-black">
    <div className="mr-[9px] h-[31px] rounded-r bg-[#cce2ff]" />
    <hr className="mt-[89px] w-[10px] border-[#e2e2e2]" />
    <hr className="mt-[173px] w-[10px] border-[#e2e2e2]" />
    <a href="#platform" className="mt-[59px] flex w-[25px] justify-end whitespace-nowrap">平台</a>
    <a href="#course" className="mt-[17px] flex w-[11px] justify-end whitespace-nowrap">程</a>
  </aside>
);

const App = () => {
  return (
    <div className="relative flex min-h-screen overflow-hidden bg-white font-['Open_Sans','Noto_Sans_CJK_SC',sans-serif] text-[12px] leading-4 text-[#222]">
      <Sidebar />
      <main className="flex-1 pt-3">
        <div className="h-[242px] bg-[#f7f7f7] pt-[145px] pr-[29px] text-right">定额</div>
      </main>
      <MainWindow />
      <svg className="absolute top-[490px] left-[389px]" width="40" height="56" viewBox="0 0 40 56" aria-hidden="true">
        <path d="M38 0l-1.300 18.500-5.500-3L2 55.500 1 55l24-43-3.500-3z" fill="#ff3b3b" />
      </svg>
      <QueryDialog />
    </div>
  );
};

export default App;
